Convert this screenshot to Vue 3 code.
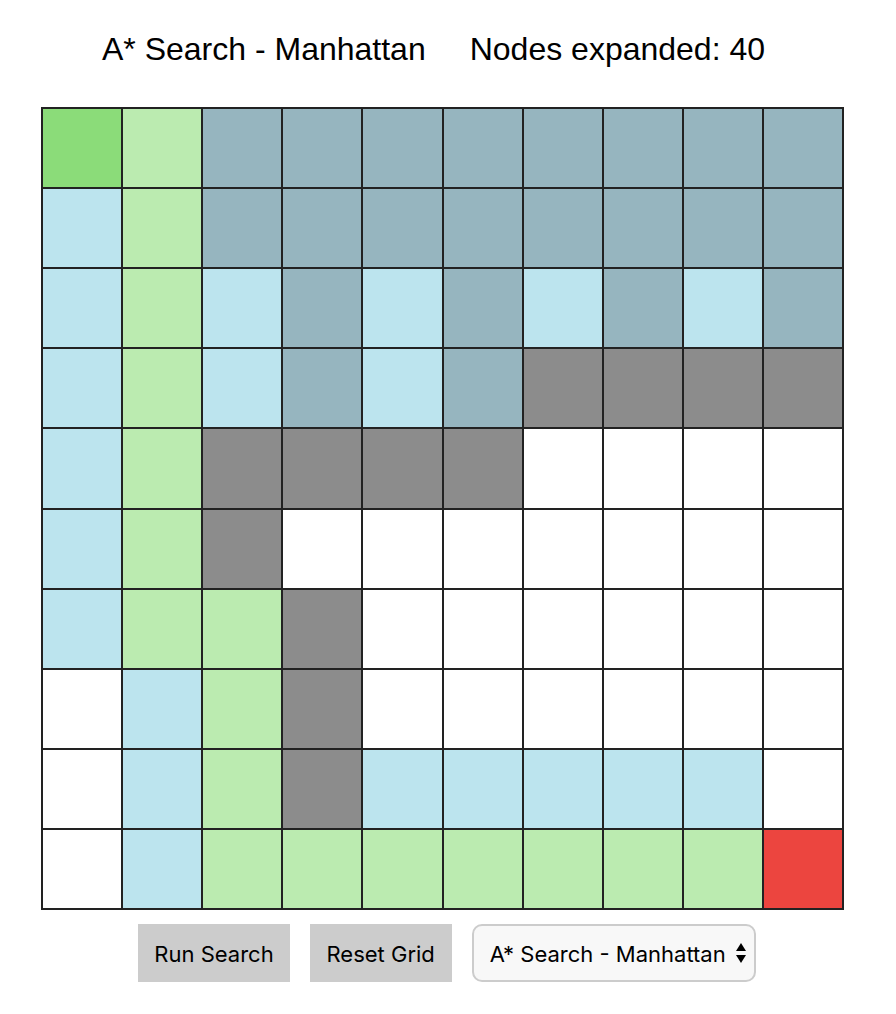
<script setup>
import { ref } from 'vue'

const algorithm = ref('manhattan')

const options = [
  { value: 'manhattan', label: 'A* Search - Manhattan' },
  { value: 'euclidean', label: 'A* Search - Euclidean' },
  { value: 'dijkstra', label: 'Dijkstra' },
]

// s start, g goal, p path, v visited, f heavy terrain, w wall, . empty
const kinds = { s: 'start', g: 'goal', p: 'path', v: 'visited', f: 'heavy', w: 'wall', '.': 'empty' }

const rows = [
  'spffffffff',
  'vpffffffff',
  'vpvfvfvfvf',
  'vpvfvfwwww',
  'vpwwww....',
  'vpw.......',
  'vppw......',
  '.vpw......',
  '.vpwvvvvv.',
  '.vpppppppg',
]

const cells = rows.join('').split('')
</script>

<template>
  <main class="page">
    <header class="status">
      <span>A* Search - Manhattan</span>
      <span>Nodes expanded: 40</span>
    </header>
    <div class="grid">
      <div v-for="(cell, i) in cells" :key="i" class="cell" :class="kinds[cell]"></div>
    </div>
    <div class="controls">
      <button type="button" class="action">Run Search</button>
      <button type="button" class="action">Reset Grid</button>
      <div class="picker">
        <select v-model="algorithm" aria-label="Search algorithm">
          <option v-for="o in options" :key="o.value" :value="o.value">{{ o.label }}</option>
        </select>
        <svg class="arrows" viewBox="0 0 10 20" aria-hidden="true">
          <path d="M5 0 L10 8 H0 Z M0 12 H10 L5 20 Z" />
        </svg>
      </div>
    </div>
  </main>
</template>

<style>
body {
  background: #fff;
}
</style>

<style scoped>
.page {
  max-width: 803px;
  margin: 0 auto;
  padding: 28px 52px 32px 41px;
  color: #000;
}

.status {
  display: flex;
  justify-content: center;
  gap: 44px;
  padding-right: 18px;
  margin-bottom: 37px;
  font: 32px/42px "Liberation Sans", Arial, sans-serif;
}

.grid {
  display: grid;
  grid-template-columns: repeat(10, 1fr);
  gap: 2px;
  padding: 2px;
  background: #222;
}

.cell {
  aspect-ratio: 1;
}

.empty { background: #fff; }
.start { background: #8bdc79; }
.goal { background: #ec453f; }
.path { background: #bbebb0; }
.visited { background: #bce4ee; }
.heavy { background: #96b5bf; }
.wall { background: #8c8c8c; }

.controls {
  display: flex;
  justify-content: center;
  gap: 20px;
  margin-top: 14px;
  padding-left: 9px;
}

.action,
.picker select {
  box-sizing: border-box;
  height: 58px;
  margin: 0;
  color: #000;
  font: 22px/28px Inter, sans-serif;
}

.action {
  min-width: 142px;
  padding: 2px 16px 0;
  border: 0;
  background: #ccc;
}

.picker {
  position: relative;
}

.picker select {
  appearance: none;
  width: 284px;
  padding: 2px 16px 0;
  border: 2px solid #ccc;
  border-radius: 10px;
  background: #f8f8f8;
}

.arrows {
  position: absolute;
  top: 19px;
  right: 10px;
  width: 10px;
  height: 20px;
  pointer-events: none;
}
</style>
